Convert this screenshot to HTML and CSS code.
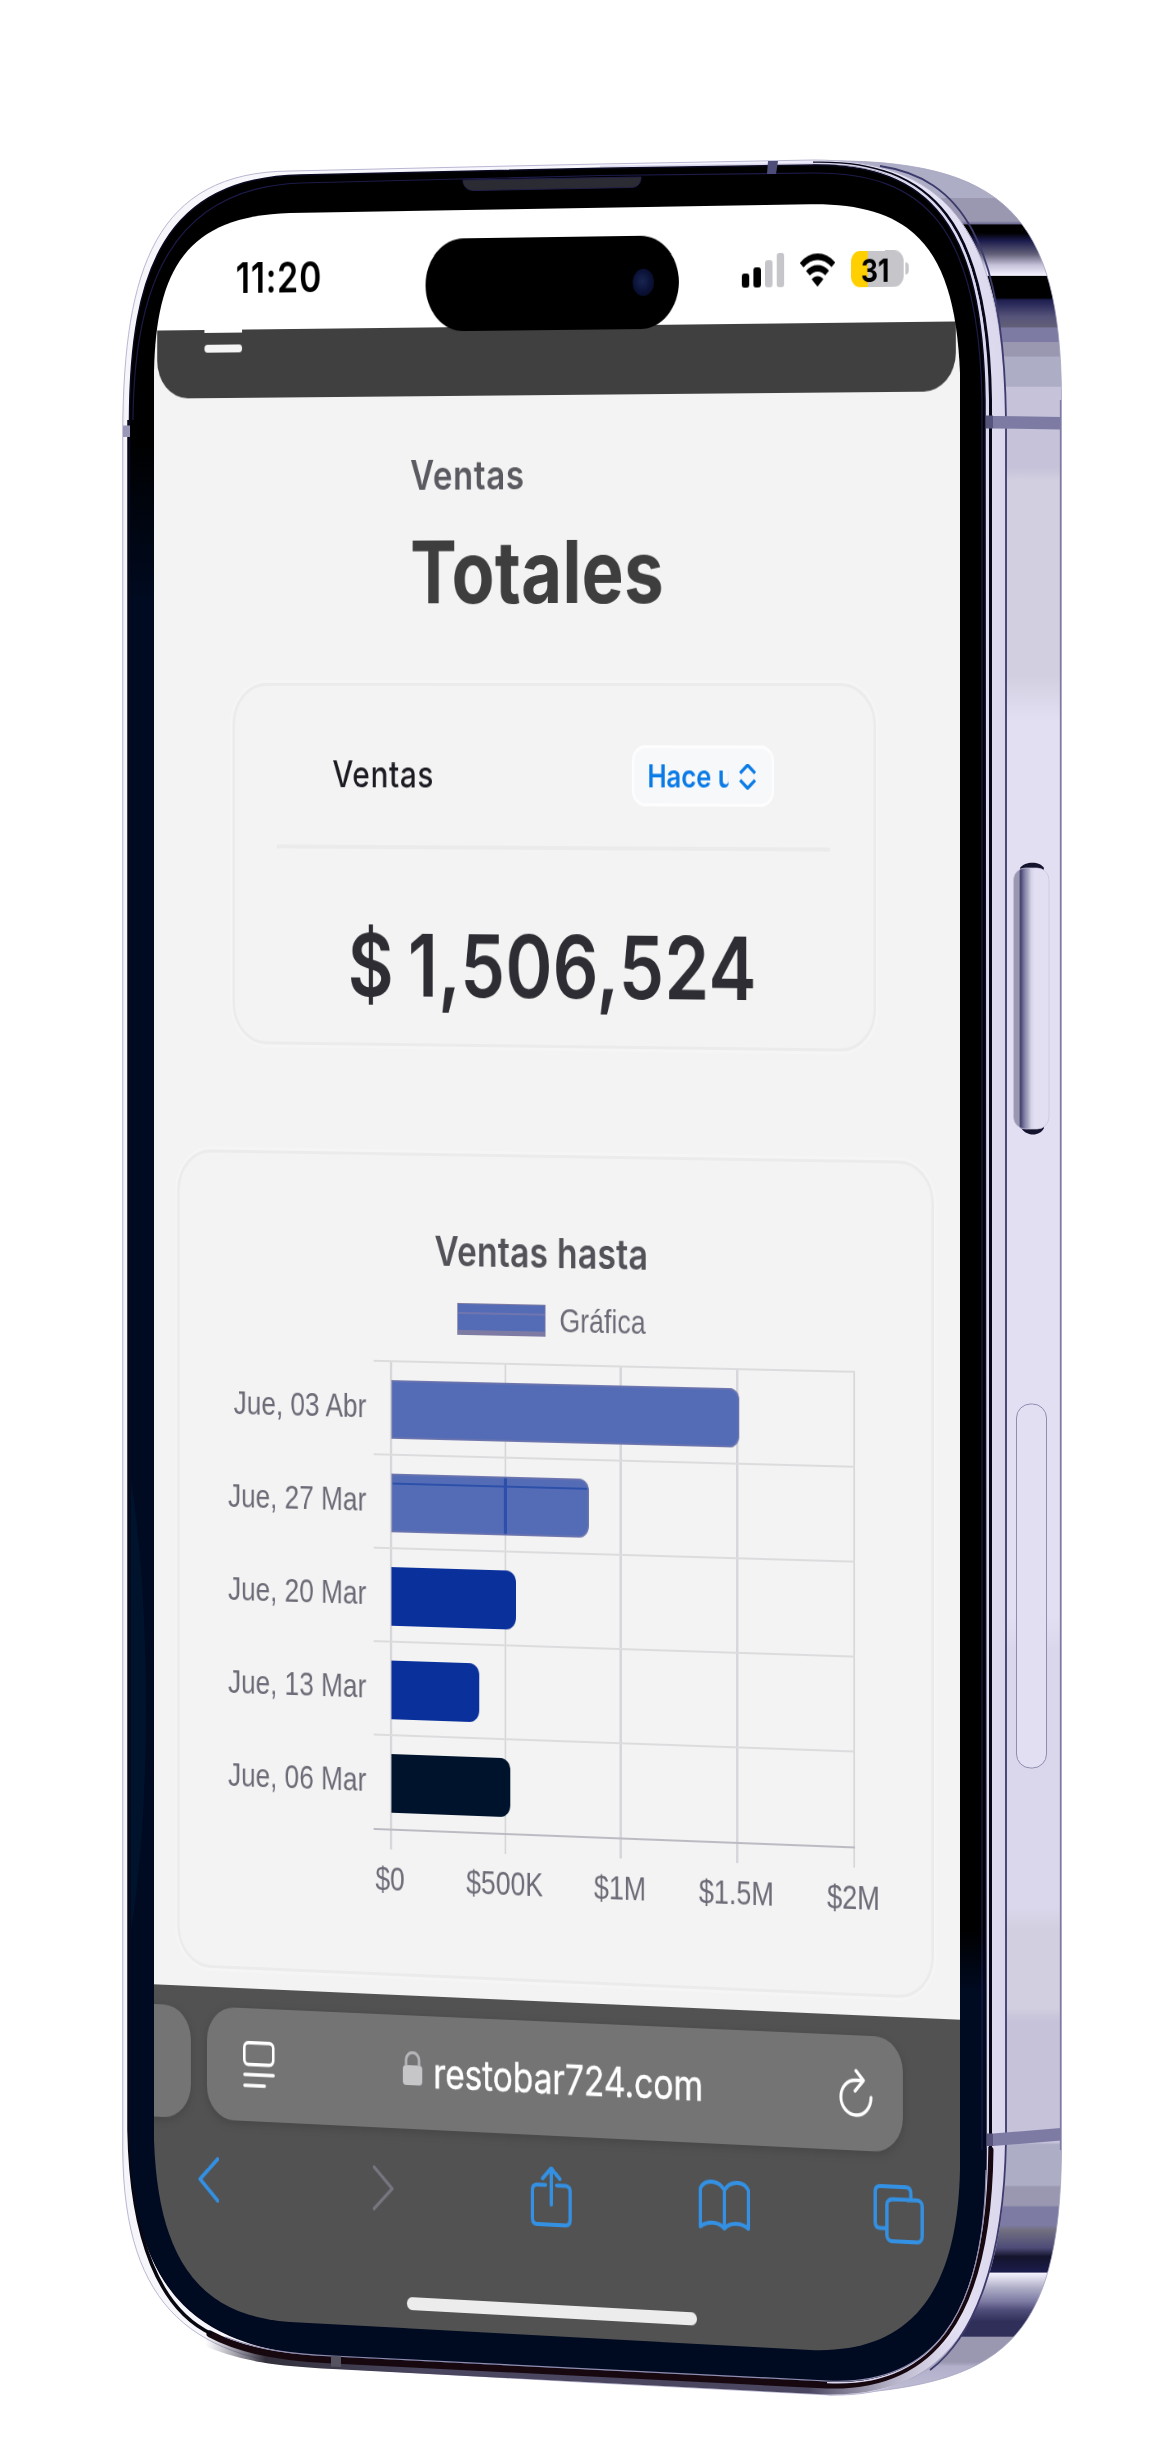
FILE: index.html
```html
<!DOCTYPE html>
<html lang="es">
<head>
<meta charset="utf-8">
<title>Ventas - Totales</title>
<link rel="stylesheet" href="styles.css">
</head>
<body>
<div class="stage">
  <svg class="phone" viewBox="0 0 1156 2456" aria-hidden="true">
    <defs>
      <linearGradient id="side" gradientUnits="userSpaceOnUse" x1="0" y1="160" x2="0" y2="2400">
        <stop offset="0" stop-color="#aeadc6"/><stop offset=".0168" stop-color="#aeadc6"/>
        <stop offset=".0172" stop-color="#9a98b0"/><stop offset=".0272" stop-color="#9a98b0"/>
        <stop offset=".0285" stop-color="#6d6b93"/><stop offset=".029" stop-color="#000"/>
        <stop offset=".0325" stop-color="#000"/><stop offset=".036" stop-color="#1b1b4c"/>
        <stop offset=".042" stop-color="#625f78"/><stop offset=".047" stop-color="#c5c2da"/>
        <stop offset=".0515" stop-color="#f4f1ff"/><stop offset=".052" stop-color="#000"/>
        <stop offset=".0615" stop-color="#000"/><stop offset=".0625" stop-color="#1e1e50"/>
        <stop offset=".070" stop-color="#56547a"/><stop offset=".0745" stop-color="#625f78"/>
        <stop offset=".075" stop-color="#7d7ba3"/><stop offset=".081" stop-color="#7d7ba3"/>
        <stop offset=".0815" stop-color="#9a98b0"/><stop offset=".0875" stop-color="#9a98b0"/>
        <stop offset=".088" stop-color="#aeadc6"/><stop offset=".101" stop-color="#aeadc6"/>
        <stop offset=".1015" stop-color="#c5c2da"/><stop offset=".137" stop-color="#c5c2da"/>
        <stop offset=".143" stop-color="#d2cfe0"/><stop offset=".23" stop-color="#d2cfe0"/>
        <stop offset=".25" stop-color="#e3dff3"/><stop offset=".65" stop-color="#e3dff3"/>
        <stop offset=".665" stop-color="#dad7ec"/><stop offset=".78" stop-color="#dad7ec"/>
        <stop offset=".79" stop-color="#d2cfe0"/><stop offset=".825" stop-color="#d2cfe0"/>
        <stop offset=".831" stop-color="#c5c2da"/><stop offset=".885" stop-color="#c5c2da"/>
        <stop offset=".886" stop-color="#aeadc6"/><stop offset=".904" stop-color="#aeadc6"/>
        <stop offset=".905" stop-color="#9a98b0"/><stop offset=".913" stop-color="#9a98b0"/>
        <stop offset=".914" stop-color="#7d7ba3"/><stop offset=".922" stop-color="#7d7ba3"/>
        <stop offset=".924" stop-color="#727080"/><stop offset=".932" stop-color="#4e4c78"/>
        <stop offset=".936" stop-color="#14142c"/><stop offset=".943" stop-color="#1b1b4c"/>
        <stop offset=".9432" stop-color="#f6f3ff"/><stop offset=".950" stop-color="#aeadc6"/>
        <stop offset=".956" stop-color="#7d7ba3"/><stop offset=".960" stop-color="#4e4c78"/>
        <stop offset=".965" stop-color="#302f5a"/><stop offset=".9715" stop-color="#302f5a"/>
        <stop offset=".972" stop-color="#9a98b0"/><stop offset=".983" stop-color="#9a98b0"/>
        <stop offset=".985" stop-color="#b1afca"/><stop offset="1" stop-color="#c5c2da"/>
      </linearGradient>
      <linearGradient id="rim" gradientUnits="userSpaceOnUse" x1="122" y1="0" x2="1006" y2="0">
        <stop offset="0" stop-color="#e4e4ee"/><stop offset=".004" stop-color="#f6f6fa"/>
        <stop offset=".6" stop-color="#f8f7ff"/><stop offset=".95" stop-color="#e3dff3"/><stop offset="1" stop-color="#dad7ec"/>
      </linearGradient>
      <linearGradient id="underside" gradientUnits="userSpaceOnUse" x1="205" y1="0" x2="960" y2="0">
        <stop offset="0" stop-color="#55536a" stop-opacity="0"/><stop offset=".08" stop-color="#33303c"/>
        <stop offset=".3" stop-color="#4a4660"/><stop offset=".8" stop-color="#4a4660"/><stop offset="1" stop-color="#9a98b0" stop-opacity="0"/>
      </linearGradient>
      <linearGradient id="navyFade" x1="0" y1="0" x2="0" y2="1">
        <stop offset="0" stop-color="#000a20" stop-opacity="0"/><stop offset="1" stop-color="#000a20"/>
      </linearGradient>
      <linearGradient id="buttonFace" x1="0" y1="0" x2="1" y2="0">
        <stop offset="0" stop-color="#9a98b0"/><stop offset=".15" stop-color="#9a98b0"/><stop offset=".2" stop-color="#44426e"/>
        <stop offset=".3" stop-color="#7d7ba3"/><stop offset=".42" stop-color="#aeadc6"/><stop offset=".5" stop-color="#d6d3e8"/><stop offset=".6" stop-color="#e3dff3"/>
      </linearGradient>
      <clipPath id="bezelClip">
        <path d="M129.5 420C130 270 165 178 300 175L600 168.3 813 165C930 164 983 225 985 400L986 2150C986 2320 930 2386 827 2381L333 2356C205 2350 131 2300 129.5 2130Z"/>
      </clipPath>
    </defs>

    <!-- titanium side -->
    <path fill="url(#side)" stroke="#a5a3c0" stroke-width=".8" d="M800 162L813 161C1005 157 1061 215 1061.500 400L1061.500 2150C1060 2345 1000 2385 830 2395L760 2380Z"/>
    <path class="edge" d="M1060.500 400V2150"/>

    <!-- rim round the glass -->
    <path fill="url(#rim)" stroke="#b9b7d2" stroke-width="1" d="M122.700 430C124 270 155 172 290 171L600 164 813 160C940 160 1003 220 1006 420L1006 2140C1004 2310 950 2398 830 2395L580 2382 333 2368C195 2362 124 2310 122.700 2150Z"/>
    <path class="groove" d="M880 166C960 178 1004 240 1006 420L1006 2140C1004 2270 970 2340 930 2370"/>
    <path fill="none" stroke="url(#underside)" stroke-width="11" d="M205 2340C240 2356 280 2361 333 2363.500L827 2389C900 2390 950 2360 975 2310"/>
    <path class="under-dark" d="M210 2334C240 2350 280 2358 333 2360L827 2385C930 2388 988 2320 990 2150"/>
    <path class="under-thin" d="M129 420V2130C131 2240 160 2310 212 2334"/>
    <path class="rim-dark" d="M813 163C934 160 988 225 990.500 400V2150"/>
    <path class="rim-light" d="M600 166.500L813 163.500C932 161 986 225 987.500 400V2150C986 2320 930 2388 827 2382.500"/>

    <!-- glass bezel -->
    <path class="bezel" d="M129.500 420C130 270 165 178 300 175L600 168.300 813 165C930 164 983 225 985 400L986 2150C986 2320 930 2386 827 2381L333 2356C205 2350 131 2300 129.500 2130Z"/>
    <g clip-path="url(#bezelClip)">
      <path fill="url(#navyFade)" d="M120 440H160V600H120Z"/>
      <path fill="#000a20" d="M120 599H160V1960H120Z"/>
      <path class="glow" d="M131 1480C150 1600 152 1800 131 1930Z"/>
      <path fill="url(#navyFade)" d="M955 1930H990V1990H955Z"/>
      <path fill="#000a20" d="M955 1989H990V2130H955ZM120 1959H160V2130H120ZM120 2129H990V2400H120Z"/>
    </g>
    <path class="bezel-line" d="M133 420C134 285 172 188 300 183L600 175.500 813 173C925 172 979 228 982 400V2150"/>
    <path class="bezel-foot" d="M225 2337C260 2350 290 2354 333 2356L827 2381C930 2386 984 2320 986 2170"/>
    <path class="speaker" d="M463 180L641 177C641 184 637 187.500 631 187.500L474 190.500C467 190.500 463 186 463 180Z"/>

    <!-- antenna bands -->
    <path fill="#4e4c78" d="M768 161L778 161 776 174 767 174Z"/>
    <path fill="#7d7ba3" d="M993 416L1061 417V429.500L993 428.500ZM993 2133.500L1061 2128V2140.500L993 2146Z"/>
    <path fill="#56547a" d="M986 415.500H993V428.500H986ZM987 2133.500H993V2146H987Z"/>
    <path fill="#9a98b8" d="M123 425.500H130V437H123Z"/>
    <path fill="#55535f" d="M331 2356L341 2356.500V2367L331 2366.500Z"/>

    <!-- side buttons -->
    <path fill="#14142e" d="M1020 868C1025 861 1040 861 1044 868L1042 876H1022ZM1020 1126C1025 1137 1040 1137 1044 1128L1042 1120H1022Z"/>
    <rect x="1013.500" y="868" width="35.500" height="261" rx="12" fill="url(#buttonFace)" stroke="#c5c2da" stroke-width=".7"/>
    <rect class="flush-button" x="1016.500" y="1404" width="30" height="364" rx="14"/>
  </svg>

  <div class="glass">
    <div class="screen">
      <div class="statusbar">
        <span class="clock">11:20</span>
        <div class="indicators">
          <svg class="signal" width="51" height="34" viewBox="0 0 51 34"><rect y="20" width="9" height="14" rx="3"/><rect x="14" y="14" width="9" height="20" rx="3"/><g fill="#c6c5ca"><rect x="28" y="7" width="9" height="27" rx="3"/><rect x="42" width="9" height="34" rx="3"/></g></svg>
          <svg class="wifi" width="42" height="33" viewBox="0 0 42 33"><g fill="none" stroke="#000" stroke-width="6.500"><path d="M2 11.500C13 .5 29 .5 40 11.500"/><path d="M9.500 19.500C16 13 26 13 32.500 19.500"/></g><path d="M21 33L14 25.500C18 21.500 24 21.500 28 25.500Z"/></svg>
          <div class="battery"><span>31</span></div>
        </div>
        <div class="island"><i></i></div>
      </div>

      <header class="navbar"><i class="bar cut"></i><i class="bar"></i></header>

      <main>
        <div class="heading">
          <p>Ventas</p>
          <h1>Totales</h1>
        </div>

        <section class="card total">
          <div class="total-head">
            <span class="label">Ventas</span>
            <div class="select">
              <span>Hace una semana</span>
              <svg width="22" height="26" viewBox="0 0 22 26"><path d="M2 9.500L11 1.500 20 9.500M2 16.500L11 24.500 20 16.500"/></svg>
            </div>
          </div>
          <hr>
          <div class="amount">$ 1,506,524</div>
        </section>

        <section class="card chart">
          <h2>Ventas hasta</h2>
          <div class="legend"><i></i>Gráfica</div>
          <div class="plot">
            <div class="gridlines"></div>
            <div class="rows">
              <div class="row"><span>Jue, 03 Abr</span><div><i class="soft" style="width:424px"></i></div></div>
              <div class="row"><span>Jue, 27 Mar</span><div><i class="soft lined" style="width:242px"></i></div></div>
              <div class="row"><span>Jue, 20 Mar</span><div><i class="royal" style="width:153px"></i></div></div>
              <div class="row"><span>Jue, 13 Mar</span><div><i class="royal" style="width:108px"></i></div></div>
              <div class="row"><span>Jue, 06 Mar</span><div><i class="night" style="width:146px"></i></div></div>
            </div>
          </div>
          <div class="axis"><span>$0</span><span>$500K</span><span>$1M</span><span>$1.5M</span><span>$2M</span></div>
        </section>
      </main>

      <footer class="safari">
        <div class="tabs">
          <div class="tab previous"></div>
          <div class="tab address">
            <svg width="40" height="48" viewBox="0 0 40 48"><g fill="none" stroke="#fff" stroke-width="3.400" stroke-linecap="round"><rect x="1.700" y="1.700" width="36" height="22" rx="5"/><path d="M2 34H38M2 45H27"/></g></svg>
            <div class="url">
              <svg width="24" height="34" viewBox="0 0 24 34"><rect y="14" width="24" height="20" rx="4" fill="#c6c5c8"/><path d="M4 15V9.500C4 -1.500 20 -1.500 20 9.500V15" fill="none" stroke="#b6b5ba" stroke-width="3"/></svg>
              <span>restobar724.com</span>
            </div>
            <svg width="40" height="48" viewBox="0 0 40 48"><path d="M29 11.500H20C9 11.500 2 19 2 28.500 2 38 10 46 20 46S38 38.500 38 28M20 2L29 11.500 19 22" fill="none" stroke="#fff" stroke-width="3.400" stroke-linecap="round" stroke-linejoin="round"/></svg>
          </div>
        </div>
        <nav class="toolbar">
          <svg class="back" width="26" height="46" viewBox="0 0 26 46"><path d="M24.500 2L2.500 23 24.500 44"/></svg>
          <svg class="forward" width="26" height="46" viewBox="0 0 26 46"><path d="M1.500 2L24 23 1.500 44"/></svg>
          <svg class="share" width="50" height="60" viewBox="0 0 50 60"><path d="M18 18.500H7.500Q2 18.500 2 24.500V52Q2 58 7.500 58H42.500Q48 58 48 52V24.500Q48 18.500 42.500 18.500H32M25 38V2M14.500 12L25 1.500 35.500 12"/></svg>
          <svg class="book" width="62" height="50" viewBox="0 0 62 50"><path d="M31 10C25 .5 8 -1.500 2 9V47C10 41.500 24 41 31 48 38 41 52 41.500 60 47V9C54 -1.500 37 .5 31 10ZM31 10V48"/></svg>
          <svg class="windows" width="60" height="58" viewBox="0 0 60 58"><path d="M14.500 43.500H8Q2 43.500 2 37.500V8Q2 2 8 2H38.500Q44.500 2 44.500 8V14"/><rect x="16" y="14.500" width="42" height="41.500" rx="6"/></svg>
        </nav>
        <div class="home"></div>
      </footer>
    </div>
  </div>
</div>
</body>
</html>
```
FILE: styles.css
```css
* { box-sizing: border-box; }
body { margin: 0; background: #fff; font-family: Inter, "Liberation Sans", sans-serif; }
p, h1, h2 { margin: 0; }
i { display: block; }
svg { display: block; flex: none; }

.stage { display: grid; width: 1156px; height: 2456px; overflow: hidden; }
.stage > * { grid-area: 1 / 1; }

/* phone body */
.phone { width: 1156px; height: 2456px; }
.edge { fill: none; stroke: #7d7ba3; stroke-width: 1.3; }
.groove { fill: none; stroke: #3d3b6c; stroke-width: 1.8; }
.under-dark { fill: none; stroke: #170810; stroke-width: 7; stroke-linecap: round; }
.under-thin { fill: none; stroke: #08060e; stroke-width: 3.5; }
.rim-dark { fill: none; stroke: #07071a; stroke-width: 3; }
.rim-light { fill: none; stroke: #d9d6ee; stroke-width: 1.6; }
.bezel { fill: #000; stroke: #0a0a22; stroke-width: 1.5; }
.bezel-line { fill: none; stroke: #1c1b4a; stroke-width: 1.2; }
.bezel-foot { fill: none; stroke: #8f8db0; stroke-width: 1.2; }
.speaker { fill: #2b2b33; stroke: #23204a; stroke-width: 1; }
.glow { fill: #00132c; }
.flush-button { fill: #e3dff3; stroke: #8f8db0; stroke-width: 1; }

/* screen: a flat page seen in light perspective, clipped to the glass */
.glass {
  width: 1156px; height: 2456px;
  clip-path: path("M154 372C156 270 186 216 290 213L810 204.3C915 203 955 250 960 373L960 2170C957 2300 905 2354 810 2350L290 2322C200 2316 158 2260 154 2140Z");
}
.screen {
  display: flex; flex-direction: column;
  width: 1000px; height: 2456px; margin-left: 57px; padding-top: 190px;
  background: #f3f3f3;
  transform-origin: 500px 670px;
  transform: matrix3d(1,0,0,-0.000033, 0,1,0,0, 0,0,1,0, 0,0,0,1) scaleX(.82);
}

.statusbar {
  position: relative; display: flex; justify-content: space-between; align-items: center;
  height: 136px; padding: 30px 82px 0 104px; background: #fff;
}
.clock { font-size: 42px; font-weight: 600; letter-spacing: .9px; }
.indicators { display: flex; align-items: center; gap: 19px; }
.battery {
  position: relative; display: grid; place-items: center;
  width: 63px; height: 36px; border-radius: 11px;
  background: linear-gradient(90deg, #ffcf00 20px, #c6c5ca 20px);
  font-size: 31.5px; font-weight: 700;
}
.battery span { margin-right: 5px; }
.battery::after { content: ""; position: absolute; left: 65px; top: 12px; width: 4px; height: 12px; border-radius: 0 4px 4px 0; background: #c6c5ca; }
.island { position: absolute; left: 339px; top: 47px; z-index: 2; display: flex; align-items: center; justify-content: flex-end; width: 309px; height: 92.5px; padding-right: 30px; border-radius: 47px; background: #000; }
.island i { width: 26px; height: 27px; border-radius: 50%; background: radial-gradient(circle at 45% 45%, #182550 0, #0b1238 50%, #04071a 100%); }

.navbar { display: flex; flex-direction: column; gap: 12px; height: 69px; margin: 0 20px 0 6px; padding-left: 59px; border-radius: 0 0 38px 38px; background: #404040; }
.bar { width: 47px; height: 8px; border-radius: 4px; background: #f4f4f4; }
.bar.cut { height: 3px; border-radius: 0; background: #fff; }

main { height: 1606.5px; padding-top: 55px; }
.heading { padding-left: 320px; }
.heading p { font-size: 40.5px; line-height: 50px; font-weight: 600; letter-spacing: .8px; color: #5b5a61; }
.heading h1 { margin-top: 22px; font-size: 86px; line-height: 100px; font-weight: 700; color: #3e3e3f; letter-spacing: .3px; }

.card { border: 3px solid #ebebeb; border-radius: 42px; box-shadow: 0 0 0 3px #f5f5f5; }
.total { width: 785px; height: 365px; margin: 61px 0 0 100px; padding: 59px 52px 0; }
.total-head { display: flex; justify-content: space-between; align-items: center; height: 61px; padding: 0 67px 0 69px; }
.label { position: relative; top: -1px; font-size: 36.5px; font-weight: 500; letter-spacing: .9px; color: #1c1b22; }
.select { display: flex; align-items: center; gap: 12px; width: 172px; height: 61px; padding: 0 0 0 16px; border: 3px solid #fdfdfd; border-radius: 16px; background: #f7f8f9; color: #0a7be6; }
.select span { width: 98px; overflow: hidden; white-space: nowrap; font-size: 31px; line-height: 44px; font-weight: 600; }
.select path { fill: none; stroke: #0a7be6; stroke-width: 3.4; }
hr { height: 4px; margin: 40px 0 0; border: 0; background: #ebebeb; }
.amount { margin-top: 67px; line-height: 100px; text-align: center; white-space: nowrap; font-size: 87px; font-weight: 600; letter-spacing: .4px; word-spacing: -5px; color: #2e2d33; }

.chart { width: 923px; height: 828px; margin: 107px 0 0 31px; padding-top: 65px; font-family: "Liberation Sans", Arial, sans-serif; font-size: 32.5px; color: #6c6b77; }
.chart h2 { padding-right: 24px; font: 600 41px/60px Inter, sans-serif; text-align: center; letter-spacing: .3px; color: #535258; }
.legend { display: flex; align-items: center; gap: 17px; height: 40px; margin: 18px 0 0 344px; }
.legend i { width: 108px; height: 32px; border: 1.5px solid #7d7ba3; border-bottom-width: 5px; background: linear-gradient(#546cb6 8px, #6f75ae 8px 10px, #546cb6 10px); }
.plot { display: grid; margin-top: 23px; }
.plot > * { grid-area: 1 / 1; }
.gridlines { width: 566px; height: 492px; margin-left: 260.5px; background: repeating-linear-gradient(90deg, #d6d6db 0 2.5px, transparent 2.5px 140.7px); }
.rows { height: 471px; }
.row { display: flex; height: 94.06px; }
.row span { width: 232px; padding-right: 0; text-align: right; line-height: 95px; }
.row div { display: flex; align-items: center; margin-left: 9px; width: 585px; padding-left: 22px; border-top: 2.5px solid #dcdcde; }
.row:last-child div { height: 96.5px; border-bottom: 2.5px solid #bcbbc3; }
.row i { position: relative; top: 1px; height: 59px; border-radius: 0 12px 12px 0; }
.soft { background: #546cb6; box-shadow: inset 0 0 0 1.5px #7076ac; }
.lined { background: linear-gradient(90deg, transparent 138px, #2c50aa 138px 142px, transparent 142px) no-repeat, linear-gradient(#546cb6 9px, #2c50aa 9px 11px, #546cb6 11px); }
.royal { background: #0a309c; }
.night { background: #00132c; }
.axis { display: grid; grid-template-columns: repeat(5, 140.7px); margin: 12px 0 0 191px; text-align: center; line-height: 36px; }

.safari { flex: 1; background: #525252; }
.tabs { display: flex; gap: 20px; height: 114px; margin-top: 20px; }
.tab { height: 114px; border-radius: 34px; background: #747474; box-shadow: 0 3px 6px 2px #4a4a4a; }
.previous { width: 48px; border-radius: 0 34px 34px 0; }
.address { display: flex; align-items: center; justify-content: space-between; width: 849px; padding: 0 36px 0 45px; }
.url { display: flex; align-items: center; gap: 14px; margin-right: 6px; color: #fff; font-size: 41px; }
.url svg { position: relative; top: -4px; }
.url span { letter-spacing: -.1px; -webkit-text-stroke: .4px #fff; }
.toolbar { display: flex; align-items: center; height: 60px; margin-top: 31px; padding-left: 57px; }
.toolbar svg { fill: none; stroke: #3390e2; stroke-width: 4; stroke-linecap: round; stroke-linejoin: round; }
.toolbar .forward { margin-left: 191px; stroke: #77757f; stroke-width: 3.4; }
.share { margin-left: 168px; }
.book { margin-left: 154px; }
.windows { margin-left: 148px; }
.home { width: 354px; height: 13px; margin: 78.5px 0 0 316px; border-radius: 7px; background: #ececec; }
```
